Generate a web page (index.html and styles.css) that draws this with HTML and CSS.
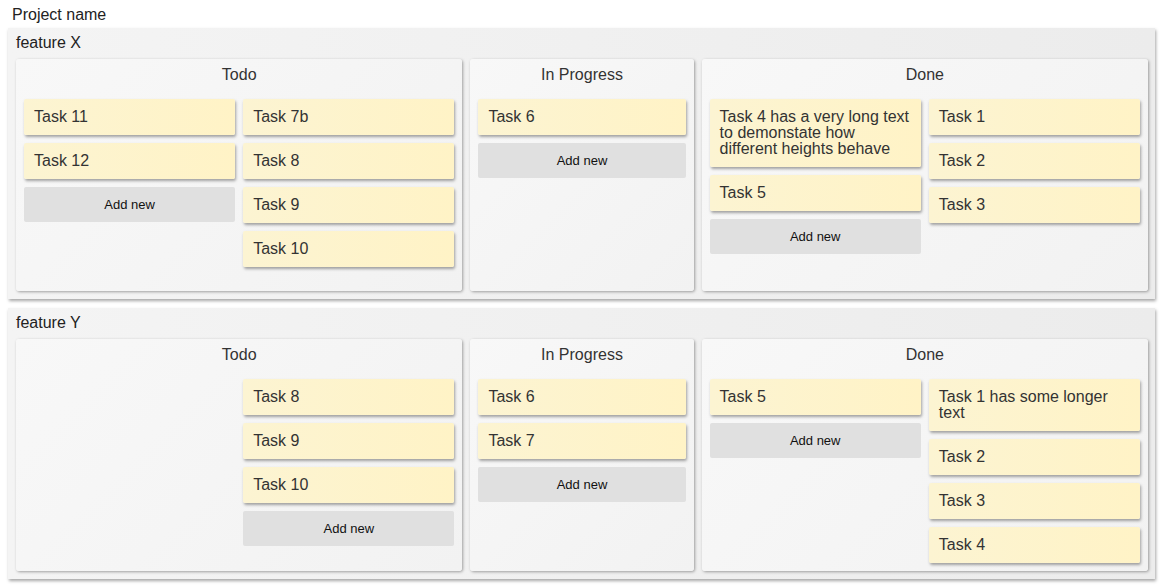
FILE: index.html
```html
<!DOCTYPE html>
<html>
<head>
<meta charset="utf-8">
<link rel="stylesheet" href="styles.css">
</head>
<body>
<div class="project">Project name</div>

<section class="feature">
  <div class="feature-title">feature X</div>
  <div class="columns">
    <div class="column">
      <div class="column-title">Todo</div>
      <div class="lanes">
        <div class="lane">
          <div class="card">Task 11</div>
          <div class="card">Task 12</div>
          <div class="add">Add new</div>
        </div>
        <div class="lane">
          <div class="card">Task 7b</div>
          <div class="card">Task 8</div>
          <div class="card">Task 9</div>
          <div class="card">Task 10</div>
        </div>
      </div>
    </div>
    <div class="column">
      <div class="column-title">In Progress</div>
      <div class="lanes">
        <div class="lane">
          <div class="card">Task 6</div>
          <div class="add">Add new</div>
        </div>
      </div>
    </div>
    <div class="column">
      <div class="column-title">Done</div>
      <div class="lanes">
        <div class="lane">
          <div class="card">Task 4 has a very long text to demonstate how different heights behave</div>
          <div class="card">Task 5</div>
          <div class="add">Add new</div>
        </div>
        <div class="lane">
          <div class="card">Task 1</div>
          <div class="card">Task 2</div>
          <div class="card">Task 3</div>
        </div>
      </div>
    </div>
  </div>
</section>

<section class="feature">
  <div class="feature-title">feature Y</div>
  <div class="columns">
    <div class="column">
      <div class="column-title">Todo</div>
      <div class="lanes">
        <div class="lane"></div>
        <div class="lane">
          <div class="card">Task 8</div>
          <div class="card">Task 9</div>
          <div class="card">Task 10</div>
          <div class="add">Add new</div>
        </div>
      </div>
    </div>
    <div class="column">
      <div class="column-title">In Progress</div>
      <div class="lanes">
        <div class="lane">
          <div class="card">Task 6</div>
          <div class="card">Task 7</div>
          <div class="add">Add new</div>
        </div>
      </div>
    </div>
    <div class="column">
      <div class="column-title">Done</div>
      <div class="lanes">
        <div class="lane">
          <div class="card">Task 5</div>
          <div class="add">Add new</div>
        </div>
        <div class="lane">
          <div class="card">Task 1 has some longer text</div>
          <div class="card">Task 2</div>
          <div class="card">Task 3</div>
          <div class="card">Task 4</div>
        </div>
      </div>
    </div>
  </div>
</section>
</body>
</html>
```

FILE: styles.css
```css
html, body {
  margin: 0;
  background: #ffffff;
}
body {
  padding: 6px 8px 0;
  font-family: "Liberation Sans", Arial, sans-serif;
  color: #333333;
  font-size: 16px;
}
.project {
  padding-left: 4px;
  line-height: 18px;
  height: 18px;
  margin-bottom: 4px;
  color: #222222;
}
.feature {
  background: linear-gradient(to right, #f4f4f4 0%, #ececec 100%);
  box-shadow: 1px 2px 3px rgba(0, 0, 0, 0.35);
  padding: 6px 7px 8px 8px;
  margin-bottom: 9px;
}
.feature-title {
  line-height: 18px;
  height: 18px;
  margin-bottom: 7px;
  color: #222222;
}
.columns {
  display: grid;
  grid-template-columns: 2fr 1fr 2fr;
  gap: 8px;
}
.column {
  box-sizing: border-box;
  min-height: 232px;
  background: linear-gradient(135deg, #f8f8f8 0%, #f2f2f2 100%);
  border-radius: 3px;
  box-shadow: 1px 1px 3px rgba(0, 0, 0, 0.35);
  padding: 7px 8px 8px;
  min-width: 0;
}
.column-title {
  text-align: center;
  line-height: 18px;
  height: 18px;
  margin-bottom: 15px;
}
.lanes {
  display: flex;
  gap: 8px;
}
.lane {
  flex: 1 1 0;
  min-width: 0;
  display: flex;
  flex-direction: column;
  gap: 8px;
}
.card {
  background: linear-gradient(to right, #fcf4d2 0%, #fff3c6 100%);
  box-shadow: 1px 2px 3px rgba(0, 0, 0, 0.35);
  border-radius: 2px;
  padding: 10px 6px 10px 10px;
  line-height: 16px;
  color: #333333;
}
.add {
  background: #e0e0e0;
  border-radius: 2px;
  text-align: center;
  font-size: 13px;
  line-height: 15px;
  padding: 10px;
  color: #111111;
}
```
